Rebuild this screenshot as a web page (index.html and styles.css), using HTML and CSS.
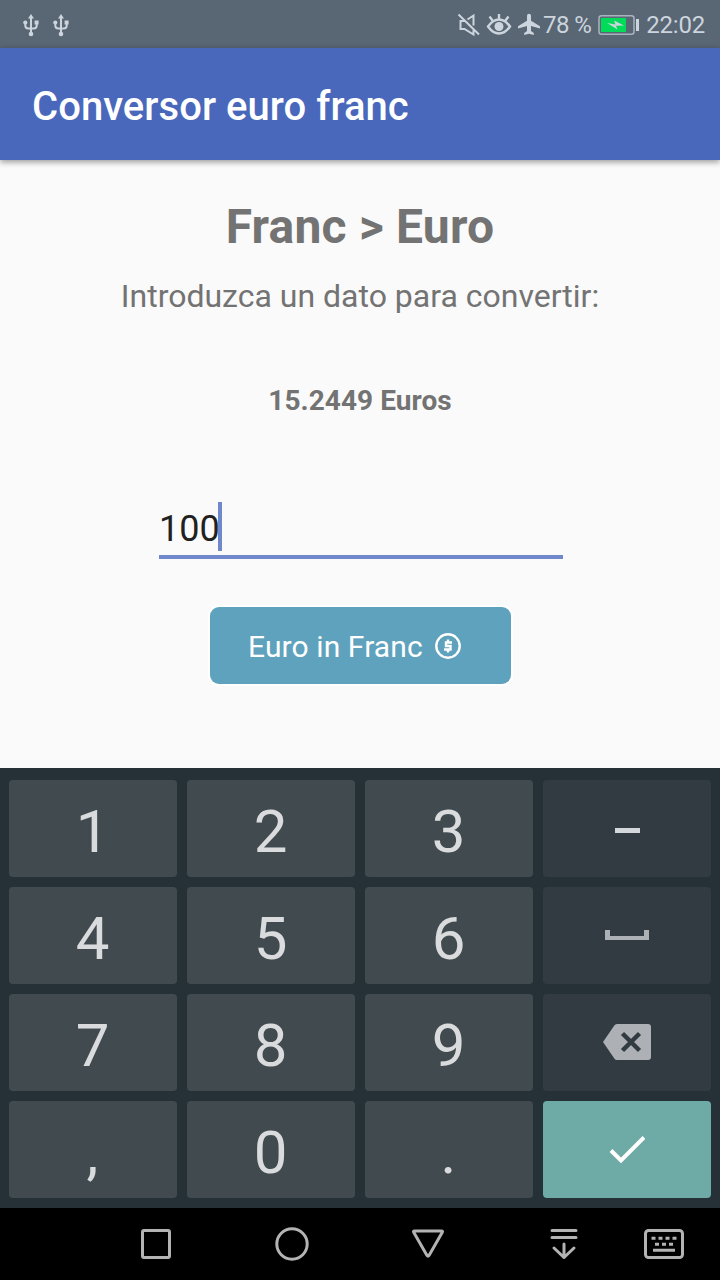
FILE: index.html
```html
<!DOCTYPE html>
<html lang="es">

<head>
    <meta charset="UTF-8">
    <meta name="viewport" content="width=device-width, initial-scale=1.0">
    <title>Conversor euro franc</title>
    <link rel="stylesheet" href="styles.css">
</head>

<body>
    <div class="status-bar">
        <svg class="usb" width="16" height="24" viewBox="0 0 16 24">
            <path d="M8 4v17M2.3 10v2.5q0 3 3 3h5.4q3 0 3-3V10" />
            <path class="solid" d="M8 1l3 4.5H5zM11.6 7.5h4v4h-4z" />
            <circle class="solid" cx="2.3" cy="9.5" r="2.1" />
            <circle class="solid" cx="8" cy="21" r="2.3" />
        </svg>
        <svg class="usb" width="16" height="24" viewBox="0 0 16 24">
            <path d="M8 4v17M2.3 10v2.5q0 3 3 3h5.4q3 0 3-3V10" />
            <path class="solid" d="M8 1l3 4.5H5zM11.6 7.5h4v4h-4z" />
            <circle class="solid" cx="2.3" cy="9.5" r="2.1" />
            <circle class="solid" cx="8" cy="21" r="2.3" />
        </svg>
        <div class="status-right">
            <!-- muted -->
            <svg width="24" height="24" viewBox="0 0 24 24">
                <path d="M1.500 1.500l20.500 20M7.500 8H3.500v8h4l9 5.500V17M10.500 6.500L16.500 2.500V12.500" />
            </svg>
            <!-- eye comfort -->
            <svg class="eye" width="26" height="24" viewBox="0 0 26 24">
                <path class="lid" d="M2 13.500Q7 6.500 13 6.500T24 13.500Q19 20.500 13 20.500T2 13.500zM13 6V1M6.500 7.500L3.500 3.500M19.500 7.500l3-4" />
                <circle class="solid" cx="13" cy="13.5" r="4.5" />
            </svg>
            <!-- airplane mode -->
            <svg class="plane" width="24" height="24" viewBox="0 0 24 24">
                <path class="solid" d="M23 15.500v-2.200l-9-5.600V2.700a2 2 0 0 0-4 0v5l-9 5.600v2.200l9-2.600v5l-2.800 2V22l4.800-1.300 4.800 1.300v-2.100l-2.800-2v-5z" />
            </svg>
            <span class="percent">78 %</span>
            <svg class="battery" width="42" height="22" viewBox="0 0 42 22">
                <rect class="case" x="1" y="1.7" width="35" height="18.6" rx="2.5" />
                <rect class="level" x="3" y="4" width="25" height="14" />
                <path class="solid" d="M9 9l8.500 1.500L16 6.500l10 5-8 .3 1.500 3.700z" />
                <rect class="solid" x="38" y="5" width="3" height="12" />
            </svg>
            <span class="clock">22:02</span>
        </div>
    </div>

    <header class="app-bar">
        <h1>Conversor euro franc</h1>
    </header>

    <main class="content">
        <h2>Franc &gt; Euro</h2>
        <p class="hint">Introduzca un dato para convertir:</p>
        <p class="result">15.2449 Euros</p>
        <div class="field">
            <span class="value">100</span><span class="cursor"></span>
        </div>
        <button class="btn">
            <span>Euro in Franc</span>
            <svg width="26" height="26" viewBox="0 0 26 26">
                <circle cx="13" cy="13" r="11.7" />
                <path d="M17 9.500h-6v3.500h4.500v3.500H9M13 6.500v3M13 16.500v3" />
            </svg>
        </button>
    </main>

    <div class="keyboard">
        <div class="key">1</div>
        <div class="key">2</div>
        <div class="key">3</div>
        <div class="key fn">
            <svg class="minus" width="26" height="5" viewBox="0 0 26 5"><path d="M1 2.5h25" /></svg>
        </div>
        <div class="key">4</div>
        <div class="key">5</div>
        <div class="key">6</div>
        <div class="key fn">
            <svg width="44" height="10" viewBox="0 0 44 10"><path class="space" d="M0 0h5v6h34V0h5v10H0z" /></svg>
        </div>
        <div class="key">7</div>
        <div class="key">8</div>
        <div class="key">9</div>
        <div class="key fn">
            <svg width="48" height="36" viewBox="0 0 48 36">
                <path class="delete" d="M14 0h31q3 0 3 3v30q0 3-3 3H14q-1.700 0-2.700-1.500L0 18 11.300 1.500Q12.300 0 14 0z" />
                <path class="cross" d="M19.500 9.500l17 17M36.500 9.500l-17 17" />
            </svg>
        </div>
        <div class="key">,</div>
        <div class="key">0</div>
        <div class="key">.</div>
        <div class="key enter">
            <svg width="36" height="28" viewBox="0 0 36 28"><path d="M2 14.500L12 24.500 35 1.500" /></svg>
        </div>
    </div>

    <nav class="nav-bar">
        <svg width="32" height="32" viewBox="0 0 32 32"><rect x="2.500" y="2.500" width="27" height="27" rx="1.500" /></svg>
        <svg width="34" height="34" viewBox="0 0 34 34"><circle cx="17" cy="17" r="15.200" /></svg>
        <svg width="34" height="30" viewBox="0 0 34 30"><path d="M3.500 2h27q1.500 0 .8 1.300L18 26.500q-1 1.500-2 0L2.700 3.300Q2 2 3.500 2z" /></svg>
        <svg width="28" height="32" viewBox="0 0 28 32"><path d="M2 2.500h24M2 9.500h24M14 16V29.500M4 20l10 9.500L24 20" /></svg>
        <svg width="40" height="30" viewBox="0 0 40 30">
            <rect x="1.500" y="1.500" width="37" height="27" rx="3" />
            <path class="keys" d="M7.500 9.300h4M14.500 9.300h4M21.500 9.300h4M28.500 9.300h4M11 15.200h4M18 15.200h4M25 15.200h4M9 21.200h22" />
        </svg>
    </nav>
</body>

</html>
```
FILE: styles.css
```css
* {
    box-sizing: border-box;
}

body {
    margin: 0;
    width: 720px;
    height: 1280px;
    display: flex;
    flex-direction: column;
    font-family: Roboto, sans-serif;
    background: #fafafa;
    overflow: hidden;
}

h1,
h2,
p {
    margin: 0;
}

svg {
    display: block;
    flex: none;
    fill: none;
}

/* status bar */
.status-bar {
    height: 48px;
    padding: 2px 15px 0 23px;
    display: flex;
    align-items: center;
    gap: 14px;
    background: #596673;
    color: #ccd4de;
    font-size: 24px;
}

.status-bar svg {
    stroke: #ccd4de;
    stroke-width: 2;
}

.status-bar .solid {
    fill: #ccd4de;
    stroke: none;
}

.status-right {
    margin-left: auto;
    display: flex;
    align-items: center;
}

.status-bar .eye {
    margin: 0 5px;
}

.status-bar .lid {
    stroke-width: 2.4;
}

.percent {
    margin: 0 7px 0 2px;
    letter-spacing: -0.6px;
}

.battery {
    margin-right: 6px;
}

.clock {
    letter-spacing: -0.2px;
}

.status-bar .case {
    stroke: #aab3bd;
    stroke-width: 1.5;
}

.status-bar .level {
    fill: #00dc5a;
    stroke: none;
}

/* app bar */
.app-bar {
    height: 112px;
    padding: 4px 32px 0;
    display: flex;
    align-items: center;
    background: #4967bb;
    box-shadow: 0 2px 6px rgba(0, 0, 0, 0.4);
}

.app-bar h1 {
    color: white;
    font-size: 40px;
    font-weight: 500;
    letter-spacing: 0.05px;
}

/* converter */
.content {
    height: 608px;
    padding-top: 39px;
    display: flex;
    flex-direction: column;
    align-items: center;
    color: #737373;
}

.content h2 {
    font-size: 48px;
    line-height: 56px;
    letter-spacing: 0.2px;
}

.hint {
    margin-top: 22px;
    font-size: 32px;
    line-height: 38px;
}

.result {
    margin-top: 69px;
    font-size: 28px;
    line-height: 34px;
    font-weight: bold;
    letter-spacing: 0.05px;
}

.field {
    width: 404px;
    height: 57px;
    margin: 84px 0 48px 2px;
    display: flex;
    border-bottom: 4px solid #6f88cb;
    color: #212121;
    font-size: 36px;
}

.value {
    line-height: 54px;
}

.cursor {
    width: 4px;
    height: 49px;
    margin-left: -2px;
    background: #6f88cb;
}

.btn {
    width: 301px;
    height: 77px;
    padding: 2px 0 0 38px;
    margin-left: 1px;
    display: flex;
    align-items: center;
    gap: 12px;
    background: #5fa2bd;
    color: white;
    border: none;
    border-radius: 9px;
    box-shadow: 0 0 0 2px white;
    font-family: inherit;
    font-size: 30px;
    letter-spacing: 0.1px;
}

.btn svg {
    margin-bottom: 2px;
    stroke: white;
    stroke-width: 2.4;
}

/* keyboard */
.keyboard {
    height: 440px;
    padding: 12px 9px 10px;
    display: grid;
    grid-template-columns: repeat(4, 168px);
    grid-auto-rows: 97px;
    gap: 10px;
    background: #263137;
}

.key {
    padding: 5px 1px 0 0;
    display: flex;
    align-items: center;
    justify-content: center;
    background: #414b4f;
    color: #d9dbdd;
    border-radius: 4px;
    font-size: 60px;
}

.key.fn {
    padding: 0 0 1px;
    background: #323b42;
}

.minus {
    margin-top: 5px;
    stroke: #d4d8dc;
    stroke-width: 5;
}

.space,
.delete {
    fill: #adb1b5;
}

.cross {
    stroke: #323b42;
    stroke-width: 4.5;
}

.key.enter {
    padding: 0;
    background: #6eaaa6;
}

.enter svg {
    stroke: white;
    stroke-width: 4;
}

/* navigation bar */
.nav-bar {
    height: 72px;
    padding-left: 88px;
    display: grid;
    grid-template-columns: 136px 136px 136px 136px 64px;
    align-items: center;
    justify-items: center;
    background: black;
}

.nav-bar svg {
    stroke: #b3b3b3;
    stroke-width: 3;
    stroke-linecap: round;
    stroke-linejoin: round;
}

.nav-bar .keys {
    stroke-linecap: butt;
}
```
